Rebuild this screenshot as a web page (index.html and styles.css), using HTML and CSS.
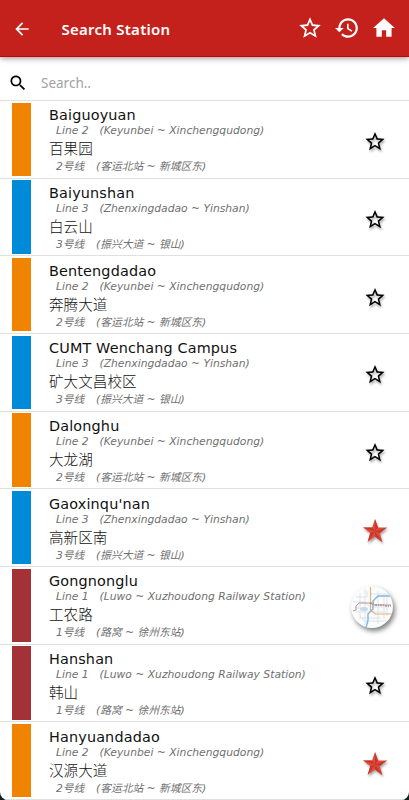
FILE: index.html
```html
<!DOCTYPE html>
<html lang="en">
  <head>
    <meta charset="UTF-8" />
    <meta name="viewport" content="width=device-width, initial-scale=1.0" />
    <title>Search Station</title>
    <link rel="stylesheet" href="styles.css">
  </head>
  <body>
    <svg class="symbols">
      <symbol id="star" viewBox="0 0 24 24">
        <path d="M22 9.24l-7.19-.62L12 2 9.19 8.63 2 9.24l5.46 4.73L5.82 21 12 17.27 18.18 21l-1.63-7.03L22 9.24zM12 15.4l-3.76 2.27 1-4.28-3.32-2.88 4.38-.38L12 6.1l1.71 4.04 4.38.38-3.32 2.88 1 4.28L12 15.4z" />
      </symbol>
      <symbol id="red-star" viewBox="0 0 24 24">
        <path fill="#e2493b" d="M12 0l2.9 8.5 9.1.1-7.3 5.5 2.7 8.9L12 17.6 4.6 23l2.7-8.9L0 8.6l9.1-.1z" />
        <path fill="#c5372c" d="M12 0v12.5l2.900-4zM24 8.6l-12 3.9 4.7 1.6zM19.4 23L12 12.5v5.1zM4.6 23L12 12.5l-4.7 1.6zM0 8.6l12 3.9-2.9-4z" />
      </symbol>
    </svg>

    <header class="topbar">
      <svg class="back" viewBox="0 0 24 24"><path d="M20 11H7.83l5.59-5.59L12 4l-8 8 8 8 1.41-1.41L7.83 13H20v-2z" /></svg>
      <h1>Search Station</h1>
      <svg class="action" viewBox="0 0 24 24"><use href="#star" /></svg>
      <svg class="action" viewBox="0 0 24 24"><path d="M13 3c-4.97 0-9 4.03-9 9H1l3.89 3.89.07.14L9 12H6c0-3.87 3.13-7 7-7s7 3.13 7 7-3.13 7-7 7c-1.93 0-3.68-.79-4.94-2.06l-1.42 1.42C8.27 19.99 10.51 21 13 21c4.97 0 9-4.03 9-9s-4.03-9-9-9zm-1 5v5l4.28 2.54.72-1.21-3.5-2.08V8H12z" /></svg>
      <svg class="action" viewBox="0 0 24 24"><path d="M10 20v-6h4v6h5v-8h3L12 3 2 12h3v8z" /></svg>
    </header>

    <div class="search">
      <svg viewBox="0 0 24 24"><path d="M15.5 14h-.79l-.28-.27C15.41 12.59 16 11.11 16 9.5 16 5.91 13.09 3 9.5 3S3 5.91 3 9.5 5.91 16 9.5 16c1.61 0 3.09-.59 4.23-1.57l.27.28v.79l5 4.99L20.49 19l-4.99-5zm-6 0C7.01 14 5 11.99 5 9.5S7.01 5 9.5 5 14 7.01 14 9.5 11.99 14 9.5 14z" /></svg>
      <input type="text" placeholder="Search.." />
    </div>

    <ul class="stations">
      <li class="line2">
        <div class="info">
          <div class="name">Baiguoyuan</div>
          <div class="route"><span>Line 2</span>(Keyunbei ~ Xinchengqudong)</div>
          <div class="name-cn">百果园</div>
          <div class="route-cn"><span>2号线</span>(客运北站 ~ 新城区东)</div>
        </div>
        <svg class="fav"><use href="#star" /></svg>
      </li>
      <li class="line3">
        <div class="info">
          <div class="name">Baiyunshan</div>
          <div class="route"><span>Line 3</span>(Zhenxingdadao ~ Yinshan)</div>
          <div class="name-cn">白云山</div>
          <div class="route-cn"><span>3号线</span>(振兴大道 ~ 银山)</div>
        </div>
        <svg class="fav"><use href="#star" /></svg>
      </li>
      <li class="line2">
        <div class="info">
          <div class="name">Bentengdadao</div>
          <div class="route"><span>Line 2</span>(Keyunbei ~ Xinchengqudong)</div>
          <div class="name-cn">奔腾大道</div>
          <div class="route-cn"><span>2号线</span>(客运北站 ~ 新城区东)</div>
        </div>
        <svg class="fav"><use href="#star" /></svg>
      </li>
      <li class="line3">
        <div class="info">
          <div class="name">CUMT Wenchang Campus</div>
          <div class="route"><span>Line 3</span>(Zhenxingdadao ~ Yinshan)</div>
          <div class="name-cn">矿大文昌校区</div>
          <div class="route-cn"><span>3号线</span>(振兴大道 ~ 银山)</div>
        </div>
        <svg class="fav"><use href="#star" /></svg>
      </li>
      <li class="line2">
        <div class="info">
          <div class="name">Dalonghu</div>
          <div class="route"><span>Line 2</span>(Keyunbei ~ Xinchengqudong)</div>
          <div class="name-cn">大龙湖</div>
          <div class="route-cn"><span>2号线</span>(客运北站 ~ 新城区东)</div>
        </div>
        <svg class="fav"><use href="#star" /></svg>
      </li>
      <li class="line3">
        <div class="info">
          <div class="name">Gaoxinqu'nan</div>
          <div class="route"><span>Line 3</span>(Zhenxingdadao ~ Yinshan)</div>
          <div class="name-cn">高新区南</div>
          <div class="route-cn"><span>3号线</span>(振兴大道 ~ 银山)</div>
        </div>
        <svg class="fav on" viewBox="0 0 24 24"><use href="#red-star" /></svg>
      </li>
      <li class="line1">
        <div class="info">
          <div class="name">Gongnonglu</div>
          <div class="route"><span>Line 1</span>(Luwo ~ Xuzhoudong Railway Station)</div>
          <div class="name-cn">工农路</div>
          <div class="route-cn"><span>1号线</span>(路窝 ~ 徐州东站)</div>
        </div>
        <!-- floating map button -->
        <svg class="map" viewBox="0 0 42 42" fill="none">
          <g stroke="#e0e3e5">
            <path d="M5 11h11v-6M2 16h12l5 5h19M9 7v23l4 5h25M14 3v36M27 5v33M33 9v24M5 26h30M8 32h22M20 8h16v22M4 22h9M17 27v11" />
          </g>
          <ellipse cx="13" cy="23" rx="4" ry="2" fill="#c5dcea" />
          <path stroke="#e8ad82" stroke-width="1.2" d="M19.500 1v23l5 4H41" />
          <path stroke="#80b6e2" stroke-width="1.4" d="M39 10H27l-5 5v8l-5 5v6l-2 8" />
          <path stroke="#b98286" stroke-width="0.9" d="M2 25l3-1v-4l3-3h10l5 2h17" />
          <path stroke="#8b7e84" stroke-width="1.2" stroke-dasharray="2 1 1 1" d="M19 17h5M24 19h9M34 20h6" />
        </svg>
      </li>
      <li class="line1">
        <div class="info">
          <div class="name">Hanshan</div>
          <div class="route"><span>Line 1</span>(Luwo ~ Xuzhoudong Railway Station)</div>
          <div class="name-cn">韩山</div>
          <div class="route-cn"><span>1号线</span>(路窝 ~ 徐州东站)</div>
        </div>
        <svg class="fav"><use href="#star" /></svg>
      </li>
      <li class="line2">
        <div class="info">
          <div class="name">Hanyuandadao</div>
          <div class="route"><span>Line 2</span>(Keyunbei ~ Xinchengqudong)</div>
          <div class="name-cn">汉源大道</div>
          <div class="route-cn"><span>2号线</span>(客运北站 ~ 新城区东)</div>
        </div>
        <svg class="fav on" viewBox="0 0 24 24"><use href="#red-star" /></svg>
      </li>
    </ul>
  </body>
</html>
```
FILE: styles.css
```css
* {
  box-sizing: border-box;
}
html {
  background: #10201c;
}
body {
  margin: 0;
  height: 800px;
  overflow: hidden;
  border-radius: 0 0 8px 8px;
  background: #fff;
  font-family: Verdana, "DejaVu Sans", "Noto Sans CJK SC", sans-serif;
  color: #111;
}
.symbols {
  display: none;
}
.topbar {
  display: flex;
  align-items: center;
  height: 57px;
  padding: 0 12px 0 12px;
  background: #c4211c;
  border-bottom: 1px solid #c00508;
  box-shadow: 0 1px 6px rgba(0, 0, 0, 0.45);
  fill: #fff;
}
.back {
  width: 20px;
  height: 20px;
  margin-top: 2px;
}
h1 {
  flex: 1;
  margin: 2px 0 0 29.5px;
  color: #fff;
  font: 600 15px "Noto Sans", sans-serif;
  letter-spacing: 0.25px;
}
.action {
  width: 26px;
  height: 26px;
  margin-left: 11px;
}
.search {
  display: flex;
  align-items: center;
  height: 44px;
  padding: 9px 8px 0;
  border-bottom: 1px solid #e2e2e2;
}
.search svg {
  width: 20px;
  height: 20px;
}
.search input {
  margin-left: 13px;
  padding: 0;
  border: 0;
  outline: 0;
  background: none;
  font: 13.5px "Noto Sans", sans-serif;
}
.search input::placeholder {
  color: #a2a2a2;
}
.stations {
  margin: 0;
  padding: 0;
  list-style: none;
}
.stations li {
  display: flex;
  align-items: center;
  height: 77.67px;
  padding: 0 22px 0 12px;
  border-bottom: 1px solid #e0e0e0;
}
.stations li::before {
  content: "";
  width: 19px;
  height: 73.5px;
  background: var(--line);
}
.line1 {
  --line: #a23236;
}
.line2 {
  --line: #f08300;
}
.line3 {
  --line: #008bd8;
}
.info {
  flex: 1;
  margin: 2px 0 0 18px;
  white-space: nowrap;
}
.name {
  height: 18px;
  font-size: 14.4px;
  line-height: 18px;
  letter-spacing: 0.15px;
}
.route,
.route-cn {
  height: 14px;
  padding-left: 7px;
  color: #707070;
  font-size: 10.75px;
  font-style: italic;
  line-height: 14px;
}
.route span {
  display: inline-block;
  width: 43.5px;
}
.name-cn {
  height: 22px;
  font-size: 14.6px;
  line-height: 22px;
  font-weight: 300;
}
.route-cn span {
  display: inline-block;
  width: 40px;
}
.fav {
  width: 24px;
  height: 24px;
  margin-top: 4px;
  padding-top: 1px;
  fill: #000;
  filter: drop-shadow(1px 2px 1px rgba(0, 0, 0, 0.35));
}
.fav.on {
  margin-top: 6px;
  padding: 0;
}
.map {
  width: 42px;
  height: 42px;
  margin: 3px -6px 0 0;
  border-radius: 50%;
  background: #fbfcfc;
  box-shadow: 2px 3px 5px rgba(0, 0, 0, 0.5);
}
```
